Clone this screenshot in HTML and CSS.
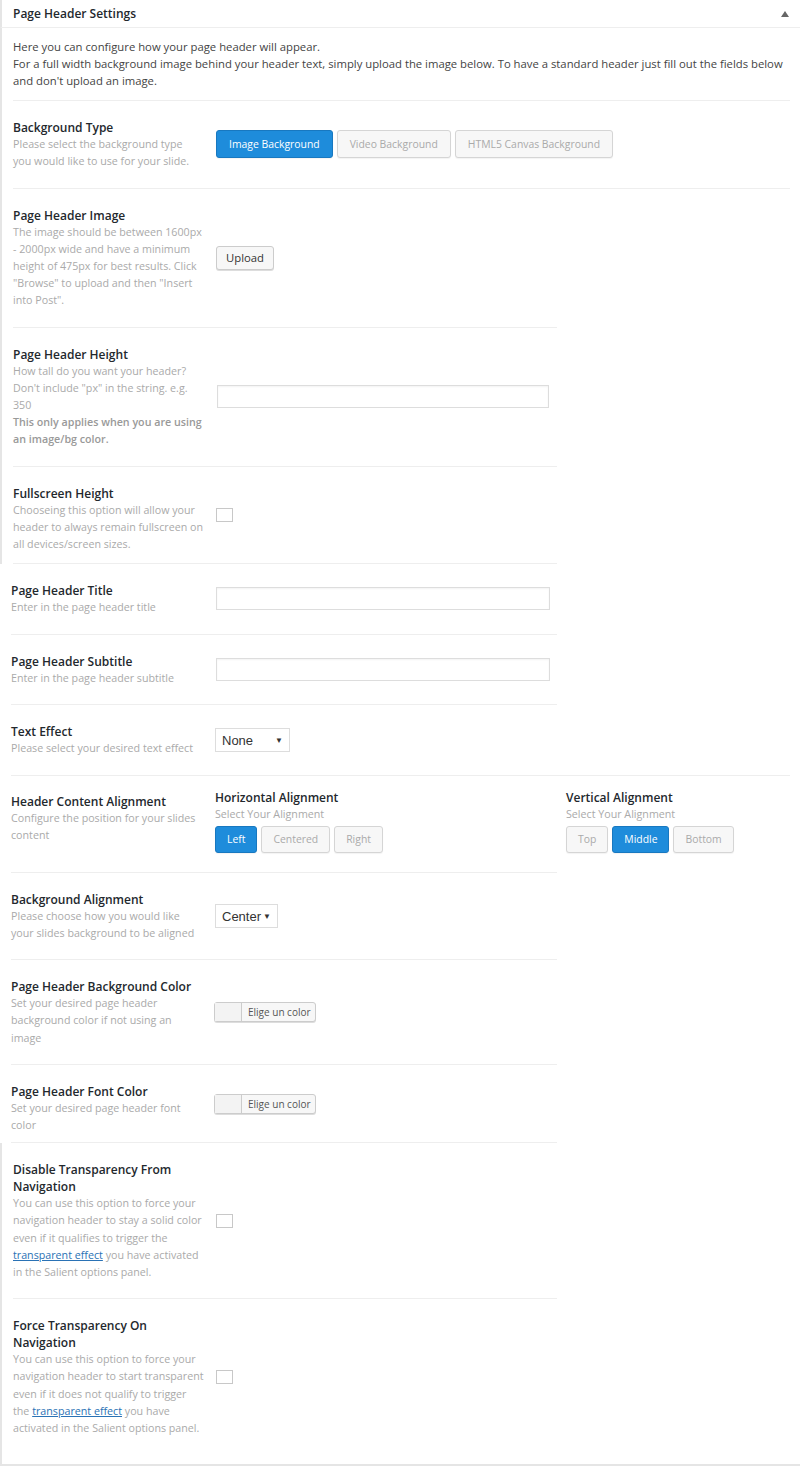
FILE: index.html
```html
<!DOCTYPE html>
<html lang="en">
  <head>
    <meta charset="UTF-8" />
    <meta name="viewport" content="width=device-width, initial-scale=1.0" />
    <title>Page Header Settings</title>
    <link rel="stylesheet" href="styles.css">
  </head>
  <body>
    <div class="postbox">
      <div class="postbox-header">
        <h2 class="postbox-title">Page Header Settings</h2>
        <span class="toggle-arrow"></span>
      </div>

      <div class="group group-bordered">
        <div class="intro">
          Here you can configure how your page header will appear.<br />
          For a full width background image behind your header text, simply upload the image below. To have a standard header just fill out the fields below and don't upload an image.
        </div>

        <div class="field-row row-wide">
          <div class="field-label">
            <div class="label-title">Background Type</div>
            <div class="label-desc">Please select the background type<br />you would like to use for your slide.</div>
          </div>
          <div class="field-control">
            <div class="btn-group">
              <button class="opt-btn active">Image Background</button>
              <button class="opt-btn">Video Background</button>
              <button class="opt-btn">HTML5 Canvas Background</button>
            </div>
          </div>
        </div>

        <div class="field-row">
          <div class="field-label">
            <div class="label-title">Page Header Image</div>
            <div class="label-desc">The image should be between 1600px - 2000px wide and have a minimum height of 475px for best results. Click "Browse" to upload and then "Insert into Post".</div>
          </div>
          <div class="field-control">
            <button class="upload-btn">Upload</button>
          </div>
        </div>

        <div class="field-row">
          <div class="field-label">
            <div class="label-title">Page Header Height</div>
            <div class="label-desc">How tall do you want your header? Don't include "px" in the string. e.g. 350<br /><strong>This only applies when you are using an image/bg color.</strong></div>
          </div>
          <div class="field-control">
            <input type="text" class="text-input" />
          </div>
        </div>

        <div class="field-row row-short">
          <div class="field-label">
            <div class="label-title">Fullscreen Height</div>
            <div class="label-desc">Chooseing this option will allow your header to always remain fullscreen on all devices/screen sizes.</div>
          </div>
          <div class="field-control">
            <span class="checkbox"></span>
          </div>
        </div>
      </div>

      <div class="group group-flat">
        <div class="field-row">
          <div class="field-label">
            <div class="label-title">Page Header Title</div>
            <div class="label-desc">Enter in the page header title</div>
          </div>
          <div class="field-control">
            <input type="text" class="text-input" />
          </div>
        </div>

        <div class="field-row">
          <div class="field-label">
            <div class="label-title">Page Header Subtitle</div>
            <div class="label-desc">Enter in the page header subtitle</div>
          </div>
          <div class="field-control">
            <input type="text" class="text-input" />
          </div>
        </div>

        <div class="field-row row-wide">
          <div class="field-label">
            <div class="label-title">Text Effect</div>
            <div class="label-desc">Please select your desired text effect</div>
          </div>
          <div class="field-control">
            <div class="select-box select-none">None <span class="select-arrow">▼</span></div>
          </div>
        </div>

        <div class="field-row row-align">
          <div class="field-label">
            <div class="label-title">Header Content Alignment</div>
            <div class="label-desc">Configure the position for your slides content</div>
          </div>
          <div class="field-control align-columns">
            <div class="align-col align-col-h">
              <div class="align-title">Horizontal Alignment</div>
              <div class="align-desc">Select Your Alignment</div>
              <div class="btn-group">
                <button class="opt-btn small active">Left</button>
                <button class="opt-btn small">Centered</button>
                <button class="opt-btn small">Right</button>
              </div>
            </div>
            <div class="align-col">
              <div class="align-title">Vertical Alignment</div>
              <div class="align-desc">Select Your Alignment</div>
              <div class="btn-group">
                <button class="opt-btn small">Top</button>
                <button class="opt-btn small active">Middle</button>
                <button class="opt-btn small">Bottom</button>
              </div>
            </div>
          </div>
        </div>

        <div class="field-row">
          <div class="field-label">
            <div class="label-title">Background Alignment</div>
            <div class="label-desc">Please choose how you would like your slides background to be aligned</div>
          </div>
          <div class="field-control">
            <div class="select-box select-center">Center <span class="select-arrow">▼</span></div>
          </div>
        </div>

        <div class="field-row">
          <div class="field-label">
            <div class="label-title">Page Header Background Color</div>
            <div class="label-desc">Set your desired page header background color if not using an image</div>
          </div>
          <div class="field-control">
            <button class="color-btn"><span class="color-swatch"></span><span class="color-text">Elige un color</span></button>
          </div>
        </div>

        <div class="field-row row-shorter">
          <div class="field-label">
            <div class="label-title">Page Header Font Color</div>
            <div class="label-desc">Set your desired page header font color</div>
          </div>
          <div class="field-control">
            <button class="color-btn"><span class="color-swatch"></span><span class="color-text">Elige un color</span></button>
          </div>
        </div>
      </div>

      <div class="group group-bordered group-last">
        <div class="field-row">
          <div class="field-label">
            <div class="label-title">Disable Transparency From Navigation</div>
            <div class="label-desc">You can use this option to force your navigation header to stay a solid color even if it qualifies to trigger the <a href="#" class="desc-link">transparent effect</a> you have activated in the Salient options panel.</div>
          </div>
          <div class="field-control">
            <span class="checkbox"></span>
          </div>
        </div>

        <div class="field-row row-last">
          <div class="field-label">
            <div class="label-title">Force Transparency On Navigation</div>
            <div class="label-desc">You can use this option to force your navigation header to start transparent even if it does not qualify to trigger the <a href="#" class="desc-link">transparent effect</a> you have activated in the Salient options panel.</div>
          </div>
          <div class="field-control">
            <span class="checkbox"></span>
          </div>
        </div>
      </div>
    </div>
  </body>
</html>
```

FILE: styles.css
```css
body {
  margin: 0;
  padding: 0;
  font-family: "Open Sans", sans-serif;
  background: #fff;
  color: #23282d;
}

.postbox {
  width: 800px;
  border-bottom: 2px solid #e5e5e5;
}

.postbox-header {
  display: flex;
  justify-content: space-between;
  align-items: center;
  height: 28px;
  padding: 0 10px 0 11px;
  border-left: 2px solid #e5e5e5;
  border-bottom: 1px solid #eee;
  box-sizing: border-box;
}

.postbox-title {
  margin: 0;
  font-size: 12px;
  font-weight: 600;
  color: #23282d;
}

.toggle-arrow {
  width: 0;
  height: 0;
  border-left: 4px solid transparent;
  border-right: 4px solid transparent;
  border-bottom: 6px solid #666;
  margin-right: 1px;
}

.group {
  padding-left: 11px;
}

.group-bordered {
  border-left: 2px solid #e5e5e5;
}

.group-last {
  padding-bottom: 10px;
}

.intro {
  width: 777px;
  padding: 10px 0 11px;
  font-size: 11.3px;
  line-height: 17px;
  color: #444;
  border-bottom: 1px solid #eee;
}

.field-row {
  display: flex;
  align-items: center;
  width: 544px;
  border-bottom: 1px solid #eee;
}

.group-flat .field-row {
  width: 546px;
}

.field-row.row-wide {
  width: 777px;
}

.group-flat .field-row.row-wide {
  width: 779px;
}

.field-row.row-last {
  border-bottom: none;
}

.field-label {
  width: 192px;
  flex-shrink: 0;
  padding: 18px 11px 17.5px 0;
}

.row-short .field-label {
  padding-bottom: 10px;
}

.row-shorter .field-label {
  padding-bottom: 8px;
}

.group-flat .field-label {
  padding-right: 12px;
}

.row-align {
  align-items: flex-start;
}

.row-align .field-label {
  padding-top: 17px;
}

.label-title {
  font-size: 12px;
  font-weight: 600;
  line-height: 17px;
  color: #23282d;
}

.label-desc {
  font-size: 10.7px;
  line-height: 17.1px;
  color: #aaa;
}

.label-desc strong {
  font-weight: 600;
  color: #999;
}

.desc-link {
  color: #2a72b5;
  text-decoration: underline;
}

.field-control {
  flex: 1;
}

.btn-group {
  display: flex;
  gap: 4px;
}

.opt-btn {
  height: 28px;
  padding: 0 12px;
  font-family: "Open Sans", sans-serif;
  font-size: 10.4px;
  color: #aaa;
  background: #f7f7f7;
  border: 1px solid #d5d5d5;
  border-radius: 3px;
  box-shadow: 0 1px 1px rgba(0, 0, 0, 0.05);
}

.opt-btn.active {
  color: #fff;
  background: #1e8cdb;
  border-color: #1878c0;
}

.opt-btn.small {
  height: 27px;
  padding: 0 11px;
}

.upload-btn {
  height: 24px;
  padding: 0 9px;
  font-family: "Open Sans", sans-serif;
  font-size: 11.3px;
  color: #333;
  background: #f7f7f7;
  border: 1px solid #ccc;
  border-radius: 3px;
  box-shadow: 0 1px 0 #ddd;
}

.text-input {
  display: block;
  width: 332px;
  height: 23px;
  margin: 0 0 0 1px;
  padding: 0 6px;
  border: 1px solid #ddd;
  box-sizing: border-box;
  box-shadow: inset 0 1px 2px rgba(0, 0, 0, 0.05);
  font-family: "Open Sans", sans-serif;
}

.group-flat .text-input {
  width: 334px;
}

.checkbox {
  display: block;
  width: 17px;
  height: 14px;
  border: 1px solid #c8c8c8;
  box-sizing: border-box;
}

.select-box {
  display: inline-flex;
  align-items: center;
  justify-content: space-between;
  height: 24px;
  padding: 0 6px;
  border: 1px solid #ddd;
  box-sizing: border-box;
  font-family: "Liberation Sans", Arial, sans-serif;
  font-size: 13px;
  color: #333;
}

.select-none {
  width: 75px;
}

.select-center {
  width: 63px;
}

.select-arrow {
  font-size: 8px;
  color: #333;
}

.align-columns {
  display: flex;
  padding: 13px 0 19px;
}

.align-col-h {
  width: 351px;
}

.align-title {
  font-size: 12px;
  font-weight: 600;
  line-height: 17px;
  color: #23282d;
}

.align-desc {
  font-size: 10.7px;
  line-height: 17px;
  color: #aaa;
  margin-bottom: 3px;
}

.color-btn {
  display: flex;
  align-items: stretch;
  height: 20px;
  padding: 0;
  border: 1px solid #ccc;
  border-radius: 3px;
  background: #f7f7f7;
  box-shadow: 0 1px 0 #ddd;
  font-family: "Open Sans", sans-serif;
  margin-left: -1px;
}

.color-swatch {
  width: 26px;
  border-right: 1px solid #ccc;
  background: #f3f3f3;
}

.color-text {
  display: flex;
  align-items: center;
  padding: 0 4px 0 6px;
  font-size: 10px;
  color: #555;
}
```
